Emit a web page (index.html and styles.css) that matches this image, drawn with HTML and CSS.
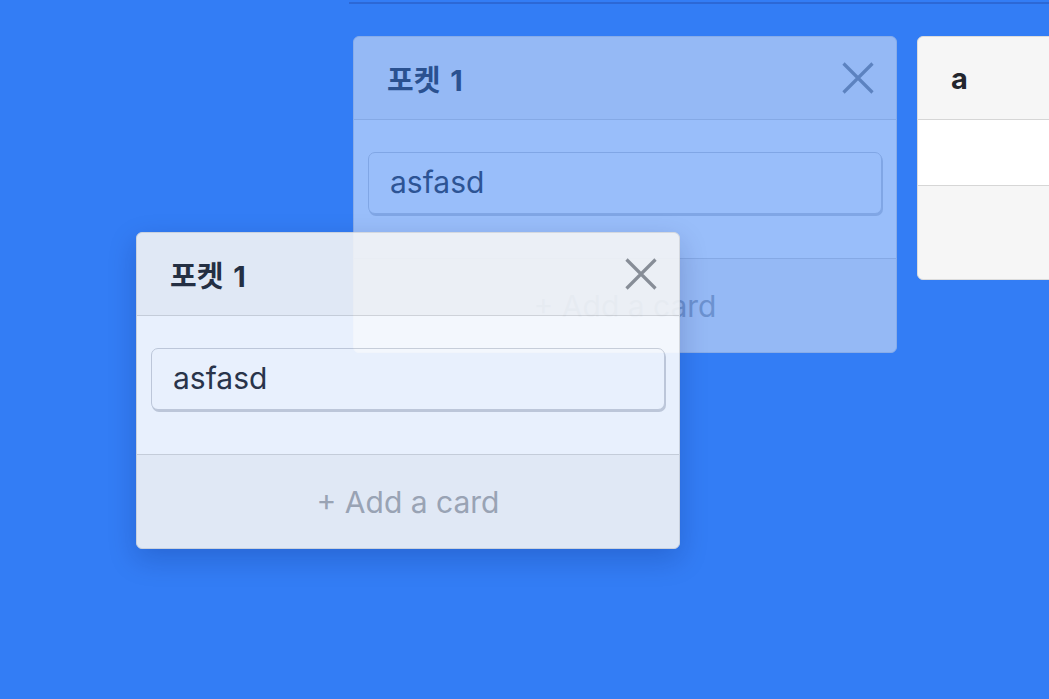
FILE: index.html
```html
<!DOCTYPE html>
<html lang="ko">
<head>
<meta charset="utf-8">
<title>Board</title>
<link rel="stylesheet" href="styles.css">
</head>
<body>
<div class="topline"></div>
<div class="board">
  <section class="column column--placeholder">
    <header class="column-header">
      <h2 class="column-title">포켓 1</h2>
      <svg class="close-icon" viewBox="0 0 32 32" width="32" height="32"><path d="M1.5 1.5 L30.5 30.5 M30.5 1.5 L1.5 30.5"/></svg>
    </header>
    <div class="column-body">
      <div class="card">asfasd</div>
    </div>
    <footer class="column-footer">+ Add a card</footer>
  </section>
  <section class="column">
    <header class="column-header">
      <h2 class="column-title">a</h2>
    </header>
    <div class="column-body column-body--empty"></div>
    <footer class="column-footer"></footer>
  </section>
</div>

<section class="column column--dragging">
  <header class="column-header">
    <h2 class="column-title">포켓 1</h2>
    <svg class="close-icon" viewBox="0 0 32 32" width="32" height="32"><path d="M1.5 1.5 L30.5 30.5 M30.5 1.5 L1.5 30.5"/></svg>
  </header>
  <div class="column-body">
    <div class="card">asfasd</div>
  </div>
  <footer class="column-footer">+ Add a card</footer>
</section>
</body>
</html>
```

FILE: styles.css
```css
* { box-sizing: border-box; }
html, body {
  margin: 0;
  padding: 0;
  height: 100%;
}
body {
  background: #337df5;
  font-family: Inter, "Liberation Sans", "Noto Sans CJK KR", sans-serif;
  overflow: hidden;
  position: relative;
}
.topline {
  margin-left: 349px;
  margin-top: 2px;
  height: 2px;
  background: #2c68d6;
}
.board {
  display: flex;
  gap: 20px;
  padding: 32px 0 0 353px;
  align-items: flex-start;
}
.column {
  width: 544px;
  flex-shrink: 0;
  background: #f6f6f6;
  border: 1px solid #dcdcdc;
  border-radius: 6px;
  overflow: hidden;
}
.column-header {
  height: 83px;
  display: flex;
  align-items: center;
  justify-content: space-between;
  padding: 0 22px 0 33px;
  border-bottom: 1px solid #d6d6d6;
}
.column-title {
  margin: 0;
  font-size: 29px;
  font-weight: 700;
  color: #23262e;
  font-family: Inter, "Noto Sans CJK KR", sans-serif;
  word-spacing: 3px;
}
.close-icon {
  display: block;
  fill: none;
  stroke: #86888c;
  stroke-width: 3.2;
}
.column-body {
  background: #ffffff;
  padding: 32px 14px 34px;
}
.column-body--empty {
  height: 65px;
  padding: 0;
}
.card {
  height: 62px;
  border: 1px solid #cdd0d6;
  border-radius: 7px;
  box-shadow: 1px 2px 0 #cdd0d6;
  display: flex;
  align-items: center;
  padding: 0 21px 3px;
  font-size: 30px;
  color: #282c36;
  margin-bottom: 10px;
  background: #ffffff;
}
.column-footer {
  height: 94px;
  display: flex;
  align-items: center;
  justify-content: center;
  font-size: 30px;
  color: #a6a8ad;
  border-top: 1px solid #d6d6d6;
}
.column--placeholder {
  opacity: 0.5;
}
.column--dragging {
  position: absolute;
  left: 136px;
  top: 232px;
  opacity: 0.89;
  box-shadow: 0 10px 28px rgba(0, 20, 80, 0.22);
}
```
